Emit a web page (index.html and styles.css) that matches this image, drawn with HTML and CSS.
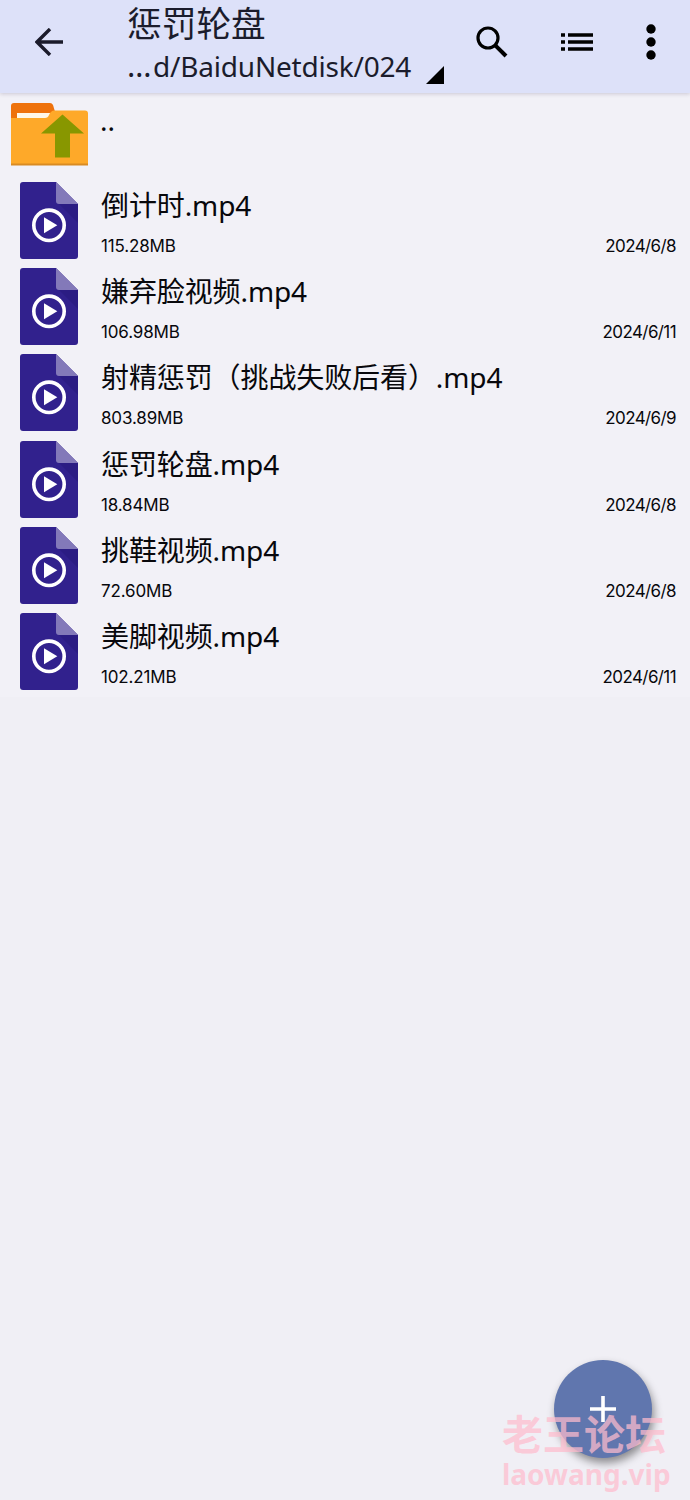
FILE: index.html
```html
<!DOCTYPE html>
<html lang="zh-CN">
<head>
<meta charset="utf-8">
<title>惩罚轮盘</title>
<link rel="stylesheet" href="styles.css">
</head>
<body>
<svg class="defs" width="0" height="0">
  <symbol id="video" viewBox="0 0 58 77">
    <path fill="#31218d" d="M3 0H36L58 22V74Q58 77 55 77H3Q0 77 0 74V3Q0 0 3 0Z"/>
    <path fill="#2b1c83" d="M39 22H58V41Z"/>
    <path fill="#8379b9" d="M36 0L58 22H39Q36 22 36 19Z"/>
    <circle cx="29" cy="43.3" r="15.2" fill="none" stroke="#fff" stroke-width="3.6"/>
    <path fill="#fff" d="M24 35.3L37.3 43.3L24 51.3Z"/>
  </symbol>
</svg>
<div class="screen">
  <header class="bar">
    <svg class="back" viewBox="0 0 28 28"><path d="M28 14H2M15 1L2 14L15 27" fill="none" stroke="#1b1b2b" stroke-width="3.4"/></svg>
    <div class="heading">
      <div class="title">惩罚轮盘</div>
      <div class="path"><span><span class="ellipsis">…</span>d/BaiduNetdisk/024</span><svg class="corner" viewBox="0 0 18 18"><path d="M18 0V18H0Z"/></svg></div>
    </div>
    <svg class="search" viewBox="0 0 32 32"><circle cx="12" cy="12" r="10" fill="none" stroke="#000" stroke-width="3.2"/><path d="M19.3 19.3L30 30" stroke="#000" stroke-width="4"/></svg>
    <svg class="list-icon" viewBox="0 0 32 18"><path d="M0 2H4M7 2H32M0 9H4M7 9H32M0 16H4M7 16H32" stroke="#000" stroke-width="3.6"/></svg>
    <svg class="more" viewBox="0 0 10 36"><circle cx="5" cy="5" r="4.7"/><circle cx="5" cy="18" r="4.7"/><circle cx="5" cy="31" r="4.7"/></svg>
  </header>
  <main class="files">
    <div class="up">
      <svg class="folder" viewBox="0 0 77 63">
        <path fill="#ee720c" d="M3 0H39Q41 0 42 2L45 12V20H0V3Q0 0 3 0Z"/>
        <path fill="#fff8e8" d="M6 10H40V17H6Z"/>
        <path fill="#fea929" d="M0 15H34Q37 15 38 12Q40 7.500 43 7.500H74Q77 7.500 77 10.500V62H0Z"/>
        <path fill="#d98b23" d="M0 60.500H77V62.500H0Z"/>
        <path fill="#889700" d="M51.500 11.500L73 30.500H59V54.500H44V30.500H30Z"/>
      </svg>
      <span class="dots">..</span>
    </div>
    <div class="row"><svg class="icon"><use href="#video"/></svg><div class="info"><div class="name">倒计时.mp4</div><div class="meta"><span>115.28MB</span><span class="date">2024/6/8</span></div></div></div>
    <div class="row"><svg class="icon"><use href="#video"/></svg><div class="info"><div class="name">嫌弃脸视频.mp4</div><div class="meta"><span>106.98MB</span><span class="date">2024/6/11</span></div></div></div>
    <div class="row"><svg class="icon"><use href="#video"/></svg><div class="info"><div class="name">射精惩罚（挑战失败后看）.mp4</div><div class="meta"><span>803.89MB</span><span class="date">2024/6/9</span></div></div></div>
    <div class="row"><svg class="icon"><use href="#video"/></svg><div class="info"><div class="name">惩罚轮盘.mp4</div><div class="meta"><span>18.84MB</span><span class="date">2024/6/8</span></div></div></div>
    <div class="row"><svg class="icon"><use href="#video"/></svg><div class="info"><div class="name">挑鞋视频.mp4</div><div class="meta"><span>72.60MB</span><span class="date">2024/6/8</span></div></div></div>
    <div class="row"><svg class="icon"><use href="#video"/></svg><div class="info"><div class="name">美脚视频.mp4</div><div class="meta"><span>102.21MB</span><span class="date">2024/6/11</span></div></div></div>
  </main>
  <div class="fab"><svg viewBox="0 0 26 26"><path d="M13 0V26M0 13H26" stroke="#fff" stroke-width="3.6"/></svg></div>
  <div class="mark"><div class="mark-cn">老王论坛</div><div class="mark-url">laowang.vip</div></div>
</div>
</body>
</html>
```
FILE: styles.css
```css
* { box-sizing: border-box; }
body { margin: 0; background: #f0eff5; font-family: "Noto Sans", "Noto Sans CJK SC", sans-serif; color: #08080c; }
svg { display: block; flex: none; }
.defs { position: absolute; }
.screen { position: relative; width: 690px; height: 1500px; overflow: hidden; background: #f0eff5; }
.bar { position: relative; display: flex; height: 93px; background: #dde1f9; box-shadow: 0 1px 4px rgba(70, 55, 90, .22); }
.back { width: 28px; height: 28px; margin: 28px 0 0 35px; }
.heading { width: 349px; margin-left: 64px; color: #1b1c2c; white-space: nowrap; }
.title { height: 48px; line-height: 48px; font-size: 34.7px; }
.path { display: flex; height: 38px; line-height: 36px; font-size: 28px; letter-spacing: -.2px; }
.ellipsis { display: inline-block; width: 26px; font-size: 31px; line-height: 1; }
.corner { width: 18px; height: 18px; margin: 18px 0 0 auto; }
.heading .path { width: 317px; }
.search { width: 32px; height: 32px; margin-top: 26px; }
.list-icon { width: 32px; height: 18px; margin: 33px 0 0 53px; }
.more { width: 10px; height: 36px; margin: 24px 0 0 53px; }
.files { height: 604px; background: #f2f1f7; }
.up { display: flex; height: 84.600px; padding: 10px 0 0 11px; }
.folder { width: 77px; height: 63px; }
.dots { margin-left: 12px; font-size: 28px; line-height: 34px; }
.row { display: flex; height: 86.200px; padding: 4.400px 14px 0 20px; }
.icon { width: 58px; height: 77px; }
.info { flex: 1; margin-left: 23px; padding-top: 3px; }
.name { height: 40px; line-height: 40px; font-size: 28px; letter-spacing: -.1px; white-space: nowrap; }
.meta { display: flex; justify-content: space-between; height: 36px; padding-top: 3px; font: 17px/36px Inter, sans-serif; letter-spacing: -.15px; }
.date { letter-spacing: -.6px; }
.fab { position: absolute; left: 554px; top: 1360px; display: grid; place-items: center; width: 98px; height: 98px; border-radius: 50%; background: #6076ae; box-shadow: 2px 5px 9px rgba(0, 0, 0, .42); }
.fab svg { width: 26px; height: 26px; }
.mark { position: absolute; left: 502px; top: 1410px; color: rgba(255, 188, 205, .72); font-weight: 700; white-space: nowrap; }
.mark-cn { height: 48px; line-height: 48px; font-size: 41px; }
.mark-url { height: 34px; line-height: 32px; font-size: 28px; }
```
